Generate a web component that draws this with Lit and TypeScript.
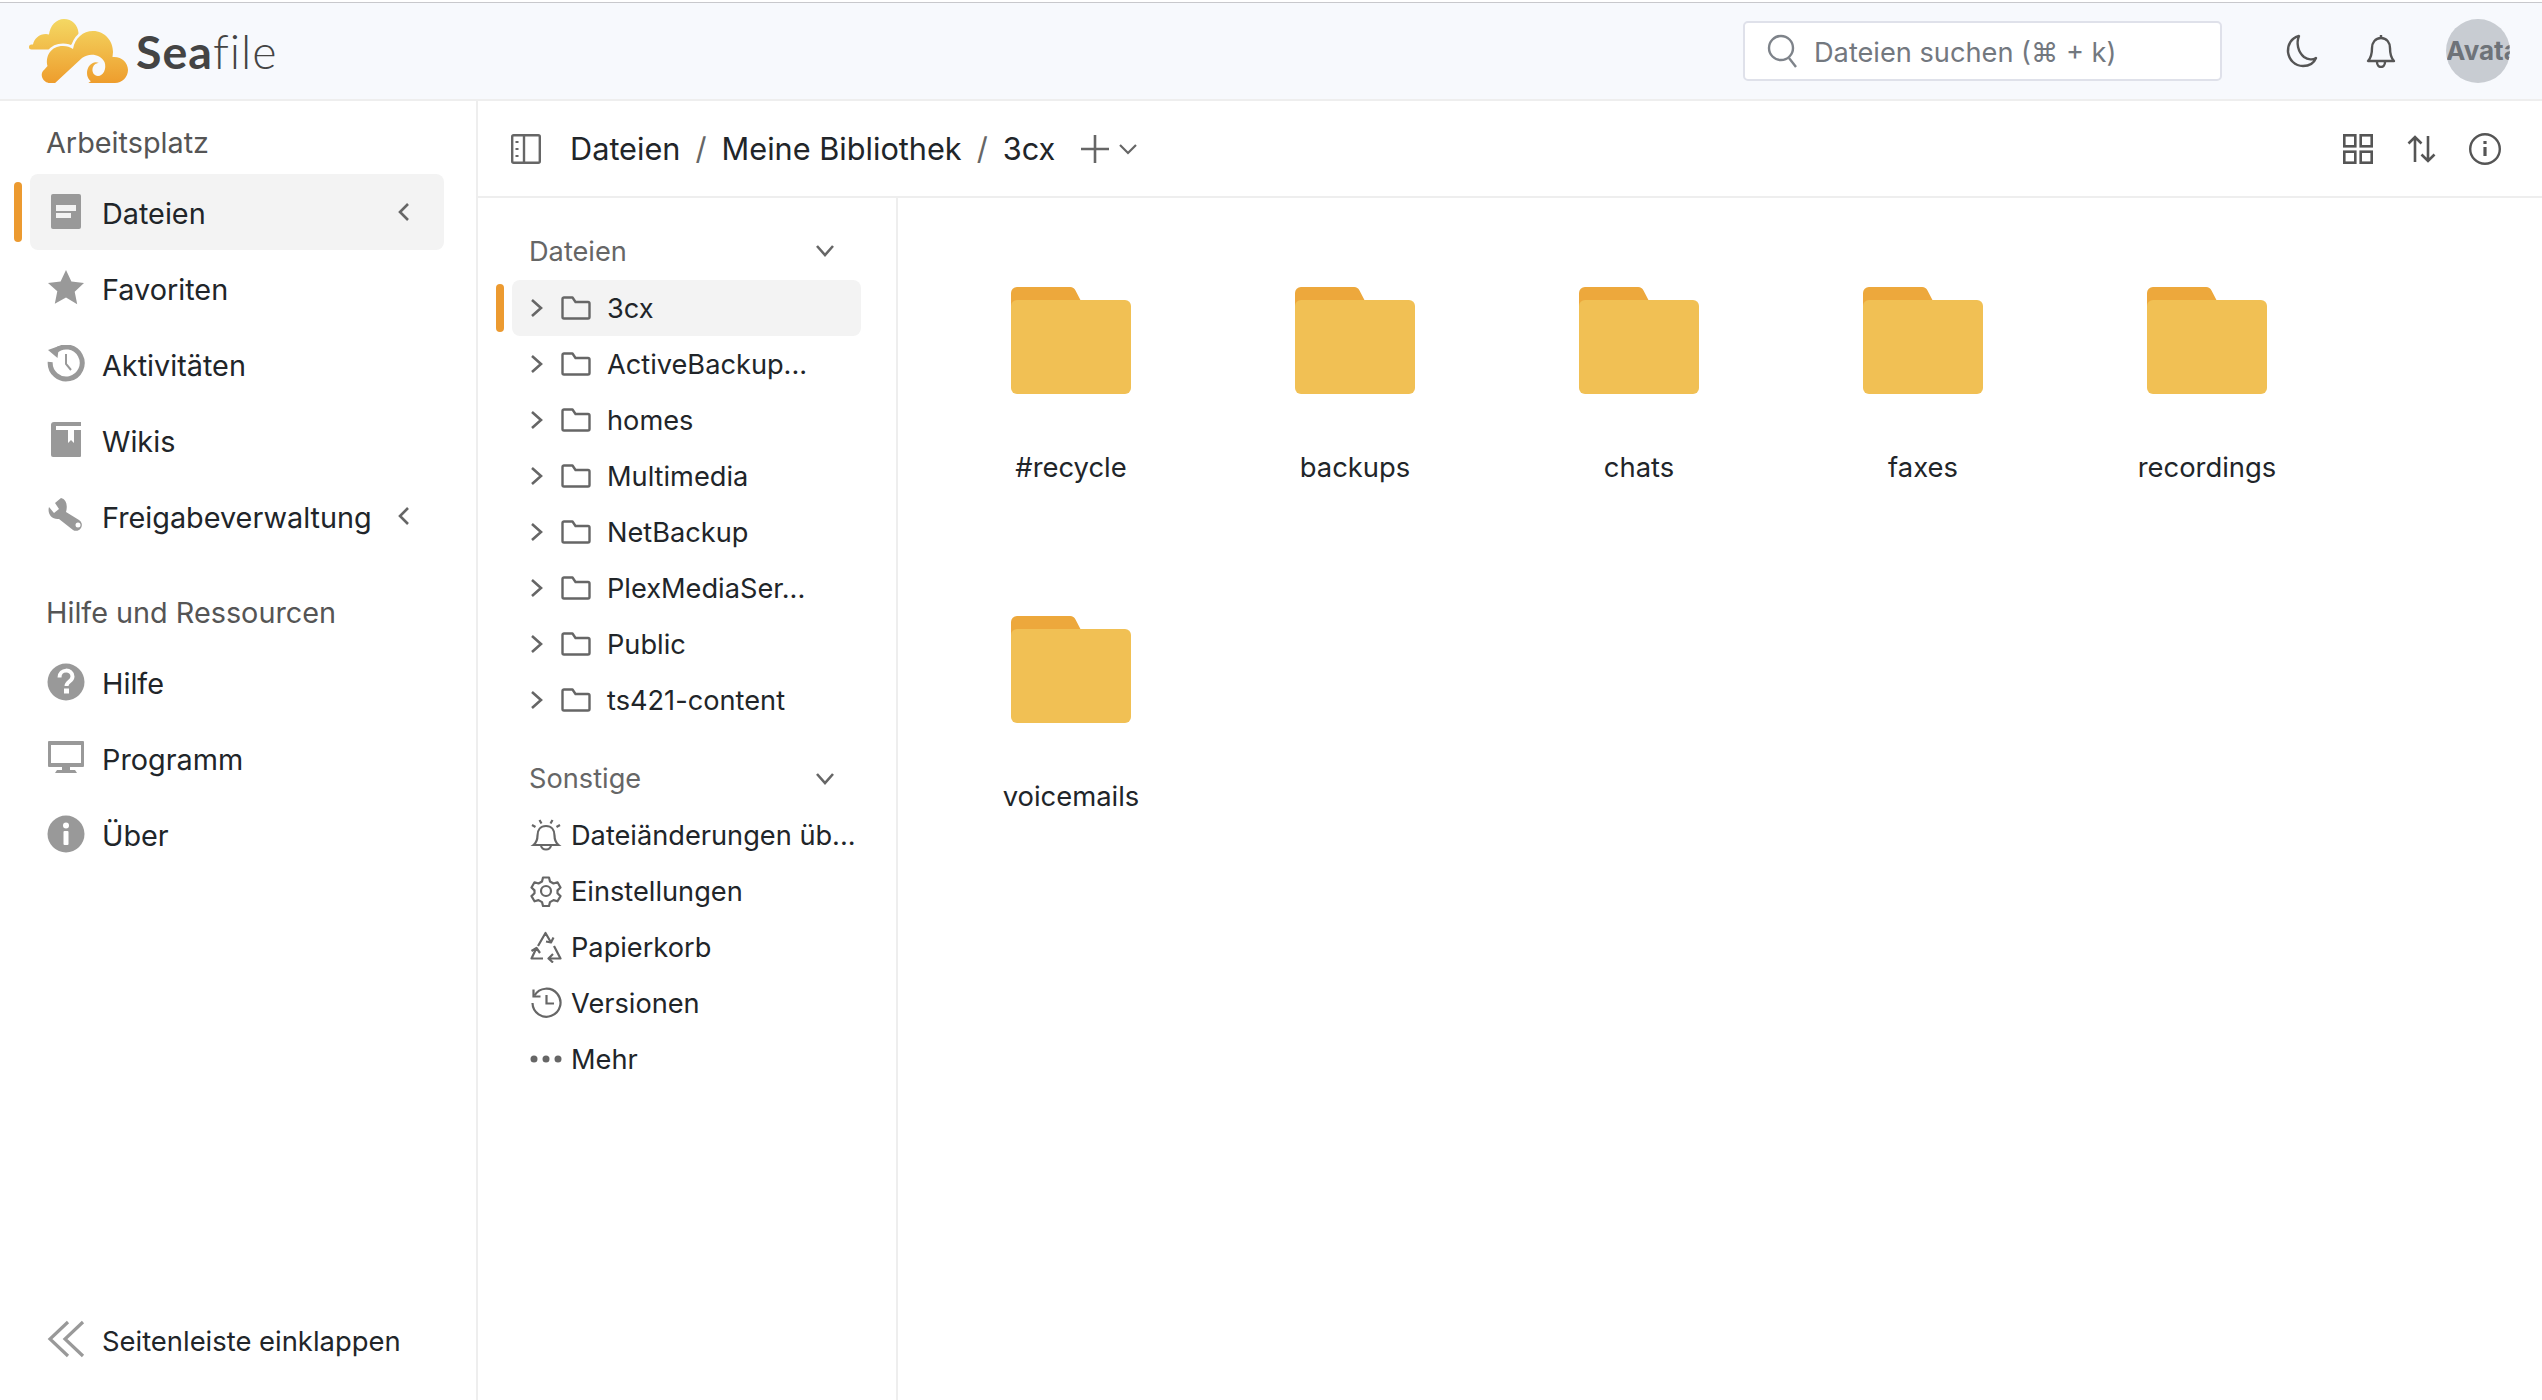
import { LitElement, html, css, svg } from 'lit';
import { customElement } from 'lit/decorators.js';

const GREY = '#999';
const DARK = '#666';
const HEADER_BG = '#f7f9fd';

const navIcons: Record<string, unknown> = {
  files: svg`<rect x="4" y="1" width="30" height="35" rx="2" fill="${GREY}"/><rect x="9" y="12" width="20" height="6" fill="#f3f3f3"/><rect x="9" y="20" width="15" height="5" fill="#f3f3f3"/>`,
  star: svg`<path d="M19 1l5.400 11.600 12.600 1.500-9.300 8.600 2.500 12.500L19 28.600 7.800 34.700l2.500-12.500L1 14.100l12.600-1.500z" fill="${GREY}"/>`,
  activity: svg`<path d="M8 6.500A16 16 0 1 1 3.200 17" fill="none" stroke="${GREY}" stroke-width="5"/><path d="M1 5l11-4-1.500 12z" fill="${GREY}"/><path d="M19 9v10l5 6" fill="none" stroke="${GREY}" stroke-width="2"/>`,
  wiki: svg`<path d="M4 4a3 3 0 0 1 3-3h27v4H9v4h25v26a1 1 0 0 1-1 1H6a2 2 0 0 1-2-2z" fill="${GREY}"/><path d="M21 9h6v13l-3-3-3 3z" fill="#fff"/>`,
  tool: svg`<path d="M14 1L8 6l4 6-5 4-5-6c-2 7 3 13 10 12l14 11a5.500 5.500 0 1 0 6-10L19 15c2-7 0-13-5-14z" fill="${GREY}"/><circle cx="31" cy="28" r="2.500" fill="#fff"/>`,
  help: svg`<circle cx="19" cy="19" r="18.500" fill="${GREY}"/><path d="M12.500 14.500c0-9 13-9 13-1 0 5-6 5-6 9.500" fill="none" stroke="#fff" stroke-width="4"/><rect x="17" y="25.500" width="5" height="5" fill="#fff"/>`,
  monitor: svg`<path d="M2 2h34a1 1 0 0 1 1 1v24a1 1 0 0 1-1 1H23v3h5l2 3H8l2-3h5v-3H2a1 1 0 0 1-1-1V3a1 1 0 0 1 1-1zm2 4v18h30V6z" fill="${GREY}" fill-rule="evenodd"/>`,
  about: svg`<circle cx="19" cy="19" r="18.500" fill="${GREY}"/><circle cx="19" cy="10.500" r="3" fill="#fff"/><rect x="16.500" y="16" width="5" height="14" rx="1" fill="#fff"/>`,
};

const otherIcons: Record<string, unknown> = {
  alarm: svg`<path d="M16 7c-5.500 0-8.500 4-8.500 9.500 0 4-1 7-4 9.500h25c-3-2.500-4-5.500-4-9.500C24.500 11 21.500 7 16 7zM11 26c0 3 2.500 4.500 5 4.500s5-1.500 5-4.500"/><path d="M2 6l3.500 2M9.500 1l2 3.500M22.500 1l-2 3.500M30 6l-3.500 2"/>`,
  gear: svg`<g transform="translate(1 1)"><circle cx="15" cy="15" r="5"/><path d="M12 1.500h6l1 4 3.500 2 4-1.200 3 5.200-3 2.900v2.800l3 2.900-3 5.200-4-1.200-3.500 2-1 4h-6l-1-4-3.500-2-4 1.200-3-5.200 3-2.900v-2.800l-3-2.900 3-5.200 4 1.200 3.500-2z" stroke-linejoin="round"/></g>`,
  recycle: svg`<path d="M8 15L15.500 2 21 11.500M16 10.500l5 1 2.500-5M24 15l6.500 12.500H20M23 23l-4.500 4.500 4.500 4M13 27.500H1.500L6 18M1.500 20l5-3 3.500 5" stroke-linejoin="round"/>`,
  history: svg`<path d="M4.500 8.500A14 14 0 1 1 2.500 16"/><path d="M3.500 2.500v7h7M16.500 8v8.500h7.500"/>`,
};

const treeItems = ['3cx', 'ActiveBackup...', 'homes', 'Multimedia', 'NetBackup', 'PlexMediaSer...', 'Public', 'ts421-content'];
const folders = ['#recycle', 'backups', 'chats', 'faxes', 'recordings', 'voicemails'];

@customElement('app-root')
export class AppRoot extends LitElement {
  static override styles = css`
    :host {
      display: block;
      height: 1400px;
      overflow: hidden;
      background: #fff;
      font-family: Inter, 'Liberation Sans', sans-serif;
      color: #212529;
      font-size: 27.2px;
    }

    svg {
      display: block;
      flex: none;
    }

    .header {
      height: 96px;
      margin-top: 2px;
      border-top: 1px solid #c8c8cc;
      border-bottom: 2px solid #eee;
      background: #f7f9fd;
      display: flex;
      align-items: center;
    }

    .logo {
      margin-left: 29px;
    }

    .brand {
      margin-left: 6px;
      font-family: Lato, sans-serif;
      font-size: 46.5px;
      color: #444;
      letter-spacing: 1px;
      font-weight: 300;
    }

    .brand b {
      font-weight: 700;
    }

    .search {
      margin-left: auto;
      width: 479px;
      height: 60px;
      box-sizing: border-box;
      background: #fff;
      border: 2px solid #dfe1ea;
      border-radius: 5px;
      display: flex;
      align-items: center;
      padding-left: 22px;
      gap: 15px;
      color: #73787f;
    }

    .search span {
      padding-top: 2px;
    }

    .moon {
      margin-left: 64px;
    }

    .bell {
      margin-left: 48px;
    }

    .avatar {
      width: 64px;
      height: 64px;
      border-radius: 50%;
      background: #c8ccd2;
      margin-left: 50px;
      margin-right: 32px;
      overflow: hidden;
      color: #6e7379;
      font-weight: 700;
      line-height: 64px;
      font-size: 26px;
      white-space: nowrap;
    }

    .body {
      display: flex;
      height: 1299px;
    }

    .side {
      width: 476px;
      flex: none;
      border-right: 2px solid #eee;
      display: flex;
      flex-direction: column;
      font-size: 28.8px;
    }

    .side-title {
      margin: 21px 0 10px 46px;
      line-height: 42px;
      color: #555;
    }

    .side-title.second {
      margin-top: 38px;
      margin-bottom: 10px;
    }

    .nav {
      position: relative;
      height: 76px;
      margin: 0 32px 0 30px;
      padding-left: 17px;
      border-radius: 8px;
      display: flex;
      align-items: center;
      gap: 17px;
    }

    .nav span {
      padding-top: 3px;
    }

    .nav .glyph {
      width: 38px;
      height: 38px;
    }

    .nav .chev {
      margin-left: auto;
      margin-right: 28px;
    }

    .nav.active {
      background: #f3f3f3;
    }

    .nav.active::before {
      content: '';
      position: absolute;
      left: -16px;
      top: 8px;
      width: 8px;
      height: 60px;
      border-radius: 4px;
      background: #ec9a30;
    }

    .collapse {
      margin-top: auto;
      margin-bottom: 23px;
    }

    .collapse span {
      font-size: 27.4px;
    }

    .main {
      flex: 1;
      display: flex;
      flex-direction: column;
      min-width: 0;
    }

    .crumbs {
      height: 95px;
      flex: none;
      border-bottom: 2px solid #eee;
      display: flex;
      align-items: center;
      padding-left: 33px;
      padding-right: 41px;
      font-size: 30.7px;
    }

    .crumbs .panel {
      margin-right: 29px;
    }

    .sep {
      color: #666;
      margin: 0 15px;
    }

    .plus {
      margin-left: 26px;
    }

    .caret {
      margin-left: 9px;
    }

    .tools {
      margin-left: auto;
      display: flex;
      align-items: center;
      gap: 32px;
    }

    .split {
      flex: 1;
      display: flex;
      min-height: 0;
    }

    .tree {
      width: 418px;
      flex: none;
      border-right: 2px solid #eee;
      padding-top: 24px;
      box-sizing: content-box;
    }

    .tree-head {
      height: 58px;
      margin-left: 51px;
      margin-right: 61px;
      display: flex;
      align-items: center;
      justify-content: space-between;
      color: #666;
    }

    .tree-head.second {
      margin-top: 22px;
      height: 57px;
    }

    .row {
      position: relative;
      height: 56px;
      margin-left: 34px;
      margin-right: 35px;
      display: flex;
      align-items: center;
      border-radius: 8px;
      padding-left: 15px;
      white-space: nowrap;
    }

    .row.active {
      background: #f3f3f3;
    }

    .row.active::before {
      content: '';
      position: absolute;
      left: -16px;
      top: 4px;
      width: 8px;
      height: 48px;
      border-radius: 4px;
      background: #ec9a30;
    }

    .row .fold {
      margin-left: 14px;
      margin-right: 16px;
    }

    .other {
      gap: 9px;
      padding-left: 18px;
    }

    .grid {
      flex: 1;
      display: grid;
      grid-template-columns: repeat(auto-fill, 284px);
      grid-auto-rows: 329px;
      padding: 89px 0 0 31px;
      align-content: start;
    }

    .cell {
      display: flex;
      flex-direction: column;
      align-items: center;
    }

    .cell span {
      margin-top: 56px;
      line-height: 34px;
      font-size: 27.4px;
    }
  `;

  private chevron(kind: 'left' | 'right' | 'down', color = DARK) {
    const shapes = {
      left: svg`<path d="M12 2L4 10l8 8"/>`,
      right: svg`<path d="M5 2l9 8-9 8"/>`,
      down: svg`<path d="M2 5l8 9 8-9"/>`,
    };
    return html`<svg class="chev" width="20" height="20" viewBox="0 0 20 20" fill="none" stroke="${color}" stroke-width="2.600">${shapes[kind]}</svg>`;
  }

  private logo() {
    const front =
      'M51 83C44 83 40 74 45 70L48.500 66C46 56 52 46 64 46C68 46 71 47 74 49C76 38 84 31 94 31C106 31 114 41 114 52L113.500 57C122 56 129 62 129 70C129 77 123 83 116 83Z';
    return html`<svg class="logo" width="101" height="65" viewBox="30 19 101 65">
      <defs>
        <linearGradient id="sea" gradientUnits="userSpaceOnUse" x1="0" y1="19" x2="0" y2="83">
          <stop offset="0" stop-color="#f4d863" />
          <stop offset="1" stop-color="#ee9d2d" />
        </linearGradient>
      </defs>
      <path
        fill="url(#sea)"
        d="M32.500 49.500a2.500 2.500 0 0 1 0-5H34C35 39 40 34 47 34L50 34.500C51 26 57 19 65 19C73 19 79 25 79.500 33L79 42L60 49.500Z"
      />
      <path d="${front}" fill="url(#sea)" stroke="${HEADER_BG}" stroke-width="5" paint-order="stroke" />
      <path d="M55 84L83 58C89 53 101 53 105.500 62C108 69 104 76 99 76L88 84Z" fill="${HEADER_BG}" />
      <path
        d="M98 83H112V76H99C95 76 93 72 93.500 69C94 65 97 63 100 63C94 60 88 66 88 73C88 79 92 83 98 83Z"
        fill="url(#sea)"
      />
    </svg>`;
  }

  private navRow(icon: string, label: string, opts: { active?: boolean; chev?: boolean } = {}) {
    return html`<div class="nav ${opts.active ? 'active' : ''}">
      <svg class="glyph" viewBox="0 0 38 38">${navIcons[icon]}</svg>
      <span>${label}</span>
      ${opts.chev ? this.chevron('left') : ''}
    </div>`;
  }

  private treeRow(name: string, active: boolean) {
    return html`<div class="row ${active ? 'active' : ''}">
      ${this.chevron('right')}
      <svg class="fold" width="30" height="24" viewBox="0 0 30 24" fill="none" stroke="${DARK}" stroke-width="2.400">
        <path d="M1.500 20V3a1.500 1.500 0 0 1 1.500-1.500h8.500l3 4.500H27A1.500 1.500 0 0 1 28.500 7.500V21a1.500 1.500 0 0 1-1.500 1.500H3A1.500 1.500 0 0 1 1.500 21z" stroke-linejoin="round" />
      </svg>
      <span>${name}</span>
    </div>`;
  }

  private otherRow(icon: string, name: string) {
    return html`<div class="row other">
      <svg width="32" height="32" viewBox="0 0 32 32" fill="none" stroke="${DARK}" stroke-width="2.200">${otherIcons[icon]}</svg>
      <span>${name}</span>
    </div>`;
  }

  private folder() {
    return html`<svg width="120" height="107" viewBox="0 0 120 107">
      <path d="M0 6a6 6 0 0 1 6-6h53a6 6 0 0 1 5.500 3.500L71 16v10H0z" fill="#eda83c" />
      <rect y="13" width="120" height="94" rx="6" fill="#f1c054" />
    </svg>`;
  }

  override render() {
    return html`
      <div class="header">
        ${this.logo()}
        <div class="brand"><b>Sea</b>file</div>
        <div class="search">
          <svg width="32" height="34" viewBox="0 0 32 34" fill="none" stroke="#7e838a" stroke-width="2.400">
            <circle cx="14" cy="14" r="12" />
            <path d="M22 24l7 9" />
          </svg>
          <span>Dateien suchen (⌘ + k)</span>
        </div>
        <svg class="moon" width="32" height="34" viewBox="0 0 32 34" fill="none" stroke="#555" stroke-width="2.400">
          <path d="M13 2C5 4 1.500 11 2 18c1 8 7 14 15 14 6 0 11-3 13-8-3 2-8 2-12-1C12 18 10 9 13 2z" stroke-linejoin="round" />
        </svg>
        <svg class="bell" width="30" height="34" viewBox="0 0 30 34" fill="none" stroke="#555" stroke-width="2.400">
          <path d="M15 4c-6 0-9 5-9 10 0 6-1 10-4 13h26c-3-3-4-7-4-13 0-5-3-10-9-10z" stroke-linejoin="round" />
          <path d="M15 1v3M11 28c0 3 2 5 4 5s4-2 4-5" />
        </svg>
        <div class="avatar">Avatar</div>
      </div>
      <div class="body">
        <div class="side">
          <div class="side-title">Arbeitsplatz</div>
          ${this.navRow('files', 'Dateien', { active: true, chev: true })}
          ${this.navRow('star', 'Favoriten')}
          ${this.navRow('activity', 'Aktivitäten')}
          ${this.navRow('wiki', 'Wikis')}
          ${this.navRow('tool', 'Freigabeverwaltung', { chev: true })}
          <div class="side-title second">Hilfe und Ressourcen</div>
          ${this.navRow('help', 'Hilfe')}
          ${this.navRow('monitor', 'Programm')}
          ${this.navRow('about', 'Über')}
          <div class="nav collapse">
            <svg class="glyph" viewBox="0 0 38 38" fill="none" stroke="${GREY}" stroke-width="3.200">
              <path d="M21 2L3 19l18 17M36 2L18 19l18 17" />
            </svg>
            <span>Seitenleiste einklappen</span>
          </div>
        </div>
        <div class="main">
          <div class="crumbs">
            <svg class="panel" width="30" height="30" viewBox="0 0 30 30" fill="none" stroke="${DARK}" stroke-width="2.400">
              <rect x="1.200" y="1.200" width="27.600" height="27.600" rx="1.500" />
              <path d="M13 1v28" />
              <path d="M6 7v2M6 14v2M6 21v2" stroke-width="3" />
            </svg>
            <span>Dateien</span>
            <span class="sep">/</span>
            <span>Meine Bibliothek</span>
            <span class="sep">/</span>
            <span>3cx</span>
            <svg class="plus" width="28" height="28" viewBox="0 0 28 28" stroke="${DARK}" stroke-width="2.600">
              <path d="M0 14h28M14 0v28" />
            </svg>
            <svg class="caret" width="20" height="20" viewBox="0 0 20 20" fill="none" stroke="${DARK}" stroke-width="2.200">
              <path d="M2 6l8 8 8-8" />
            </svg>
            <div class="tools">
              <svg width="30" height="30" viewBox="0 0 30 30" fill="none" stroke="#555" stroke-width="2.600">
                <rect x="1.300" y="1.300" width="11" height="11" />
                <rect x="17.700" y="1.300" width="11" height="11" />
                <rect x="1.300" y="17.700" width="11" height="11" />
                <rect x="17.700" y="17.700" width="11" height="11" />
              </svg>
              <svg width="32" height="30" viewBox="0 0 32 30" fill="none" stroke="#555" stroke-width="2.600">
                <path d="M10 28V3M3.500 9.500L10 3l6.500 6.500M23 2v25M16.500 20.500L23 27l6.500-6.500" />
              </svg>
              <svg width="32" height="32" viewBox="0 0 32 32" fill="none" stroke="#555" stroke-width="2.400">
                <circle cx="16" cy="16" r="14.800" />
                <path d="M16 14v9" stroke-width="3.200" />
                <path d="M16 8v3" stroke-width="3.200" />
              </svg>
            </div>
          </div>
          <div class="split">
            <div class="tree">
              <div class="tree-head">Dateien ${this.chevron('down')}</div>
              ${treeItems.map((name, i) => this.treeRow(name, i === 0))}
              <div class="tree-head second">Sonstige ${this.chevron('down')}</div>
              ${this.otherRow('alarm', 'Dateiänderungen üb...')}
              ${this.otherRow('gear', 'Einstellungen')}
              ${this.otherRow('recycle', 'Papierkorb')}
              ${this.otherRow('history', 'Versionen')}
              <div class="row other">
                <svg width="32" height="32" viewBox="0 0 32 32" fill="${DARK}">
                  <circle cx="4" cy="16" r="3.500" />
                  <circle cx="16" cy="16" r="3.500" />
                  <circle cx="28" cy="16" r="3.500" />
                </svg>
                <span>Mehr</span>
              </div>
            </div>
            <div class="grid">
              ${folders.map(
                (name) => html`<div class="cell">${this.folder()}<span>${name}</span></div>`
              )}
            </div>
          </div>
        </div>
      </div>
    `;
  }
}
